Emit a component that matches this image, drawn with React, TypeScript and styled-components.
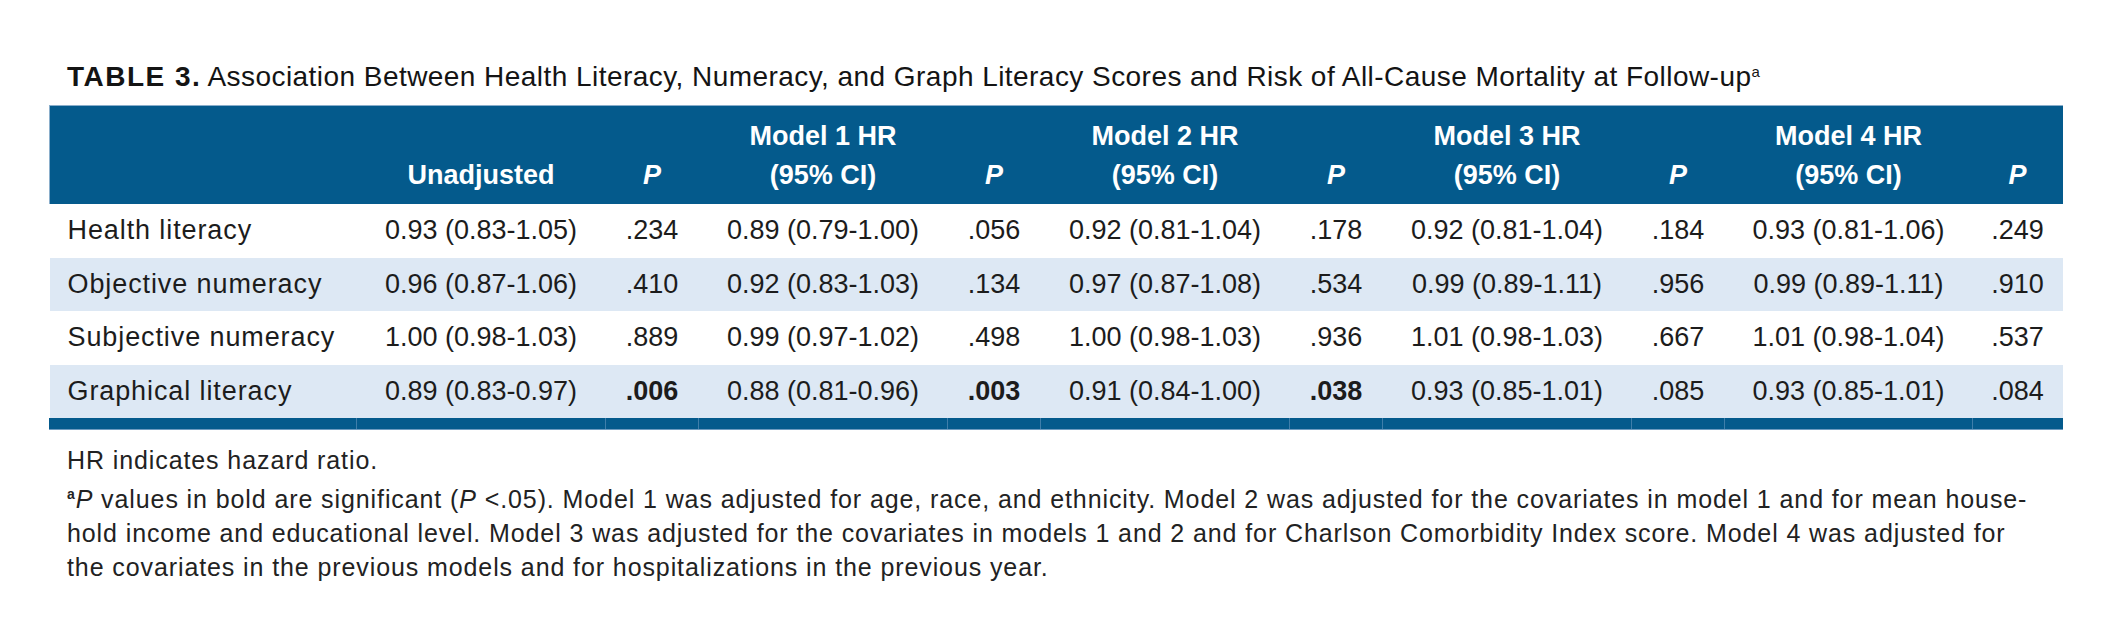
import React from "react";
import styled, { createGlobalStyle } from "styled-components";

const GlobalStyle = createGlobalStyle`
  html, body { margin: 0; padding: 0; background: #ffffff; }
  body { font-family: "Liberation Sans", Arial, sans-serif; color: #1c1c1c; }
`;

const Page = styled.div`
  width: 2113px;
  height: 644px;
  box-sizing: border-box;
  padding: 62px 51px 0 49px;
`;

const Title = styled.div`
  padding-left: 18px;
  font-size: 28px;
  letter-spacing: 0.45px;
  line-height: 30px;
  color: #141414;
  white-space: nowrap;
  margin-bottom: 13px;
`;

const Label = styled.span`
  font-weight: 700;
  letter-spacing: 1.5px;
  margin-right: 6px;
`;

const Sup = styled.sup`
  font-size: 15px;
  line-height: 0;
  vertical-align: 9px;
`;

const Table = styled.table`
  width: 2013px;
  border-collapse: collapse;
  table-layout: fixed;
`;

const HeadRow = styled.tr`
  background: #045a8c;
`;

const HeadCell = styled.th<{ $first?: boolean }>`
  padding: 11px 0 9px;
  height: 78px;
  box-sizing: content-box;
  vertical-align: bottom;
  text-align: center;
  color: #ffffff;
  font-size: 27px;
  font-weight: 700;
  line-height: 39px;
  border-top: 1px solid #8aaecb;
  border-left: ${(p) => (p.$first ? "1px solid #8aaecb" : "none")};
`;

const PHead = styled.span`
  font-style: italic;
`;

const BodyRow = styled.tr<{ $striped: boolean }>`
  background: ${(p) => (p.$striped ? "#dde8f4" : "#ffffff")};
  height: 53.5px;
`;

const NameCell = styled.td`
  padding: 0 0 0 18px;
  text-align: left;
  font-size: 27px;
  letter-spacing: 0.9px;
  white-space: nowrap;
`;

const ValueCell = styled.td<{ $bold?: boolean }>`
  padding: 0;
  text-align: center;
  font-size: 27px;
  white-space: nowrap;
  font-weight: ${(p) => (p.$bold ? 700 : 400)};
`;

const FootRow = styled.tr`
  background: #045a8c;
  height: 11px;
`;

const FootCell = styled.td<{ $first?: boolean }>`
  padding: 0;
  height: 11px;
  border-bottom: 1px solid #6d9bc0;
  border-left: 1px solid ${(p) => (p.$first ? "#045a8c" : "#3f7eaa")};
`;

const Notes = styled.div`
  padding: 13px 0 0 18px;
  font-size: 25px;
  letter-spacing: 0.9px;
  line-height: 34px;
  color: #222222;
  white-space: nowrap;
`;

const Note = styled.p`
  margin: 0 0 5px;
`;

const NoteMark = styled.sup`
  font-size: 14px;
  font-weight: 700;
  line-height: 0;
  vertical-align: 9px;
`;

type Row = { name: string; cells: { v: string; bold?: boolean }[] };

const rows: Row[] = [
  {
    name: "Health literacy",
    cells: [
      { v: "0.93 (0.83-1.05)" }, { v: ".234" },
      { v: "0.89 (0.79-1.00)" }, { v: ".056" },
      { v: "0.92 (0.81-1.04)" }, { v: ".178" },
      { v: "0.92 (0.81-1.04)" }, { v: ".184" },
      { v: "0.93 (0.81-1.06)" }, { v: ".249" },
    ],
  },
  {
    name: "Objective numeracy",
    cells: [
      { v: "0.96 (0.87-1.06)" }, { v: ".410" },
      { v: "0.92 (0.83-1.03)" }, { v: ".134" },
      { v: "0.97 (0.87-1.08)" }, { v: ".534" },
      { v: "0.99 (0.89-1.11)" }, { v: ".956" },
      { v: "0.99 (0.89-1.11)" }, { v: ".910" },
    ],
  },
  {
    name: "Subjective numeracy",
    cells: [
      { v: "1.00 (0.98-1.03)" }, { v: ".889" },
      { v: "0.99 (0.97-1.02)" }, { v: ".498" },
      { v: "1.00 (0.98-1.03)" }, { v: ".936" },
      { v: "1.01 (0.98-1.03)" }, { v: ".667" },
      { v: "1.01 (0.98-1.04)" }, { v: ".537" },
    ],
  },
  {
    name: "Graphical literacy",
    cells: [
      { v: "0.89 (0.83-0.97)" }, { v: ".006", bold: true },
      { v: "0.88 (0.81-0.96)" }, { v: ".003", bold: true },
      { v: "0.91 (0.84-1.00)" }, { v: ".038", bold: true },
      { v: "0.93 (0.85-1.01)" }, { v: ".085" },
      { v: "0.93 (0.85-1.01)" }, { v: ".084" },
    ],
  },
];

const colWidths = [307, 249, 93, 249, 93, 249, 93, 249, 93, 248, 90];

const headers: { top?: string; bottom: string; italic?: boolean }[] = [
  { bottom: "Unadjusted" },
  { bottom: "P", italic: true },
  { top: "Model 1 HR", bottom: "(95% CI)" },
  { bottom: "P", italic: true },
  { top: "Model 2 HR", bottom: "(95% CI)" },
  { bottom: "P", italic: true },
  { top: "Model 3 HR", bottom: "(95% CI)" },
  { bottom: "P", italic: true },
  { top: "Model 4 HR", bottom: "(95% CI)" },
  { bottom: "P", italic: true },
];

export default function App() {
  return (
    <>
      <GlobalStyle />
      <Page>
        <Title>
          <Label>TABLE 3.</Label>
          Association Between Health Literacy, Numeracy, and Graph Literacy Scores and Risk of All-Cause Mortality at Follow-up
          <Sup>a</Sup>
        </Title>
        <Table>
          <colgroup>
            {colWidths.map((w, i) => (
              <col key={i} style={{ width: w }} />
            ))}
          </colgroup>
          <thead>
            <HeadRow>
              <HeadCell $first />
              {headers.map((h, i) => (
                <HeadCell key={i}>
                  {h.top && (
                    <>
                      {h.top}
                      <br />
                    </>
                  )}
                  {h.italic ? <PHead>{h.bottom}</PHead> : h.bottom}
                </HeadCell>
              ))}
            </HeadRow>
          </thead>
          <tbody>
            {rows.map((r, i) => (
              <BodyRow key={r.name} $striped={i % 2 === 1}>
                <NameCell>{r.name}</NameCell>
                {r.cells.map((c, j) => (
                  <ValueCell key={j} $bold={c.bold}>
                    {c.v}
                  </ValueCell>
                ))}
              </BodyRow>
            ))}
            <FootRow>
              {colWidths.map((_, i) => (
                <FootCell key={i} $first={i === 0} />
              ))}
            </FootRow>
          </tbody>
        </Table>
        <Notes>
          <Note>HR indicates hazard ratio.</Note>
          <Note>
            <NoteMark>a</NoteMark>
            <i>P</i> values in bold are significant (<i>P</i> &lt;.05). Model 1 was adjusted for age, race, and ethnicity. Model 2 was adjusted for the covariates in model 1 and for mean house-
            <br />
            hold income and educational level. Model 3 was adjusted for the covariates in models 1 and 2 and for Charlson Comorbidity Index score. Model 4 was adjusted for
            <br />
            the covariates in the previous models and for hospitalizations in the previous year.
          </Note>
        </Notes>
      </Page>
    </>
  );
}
